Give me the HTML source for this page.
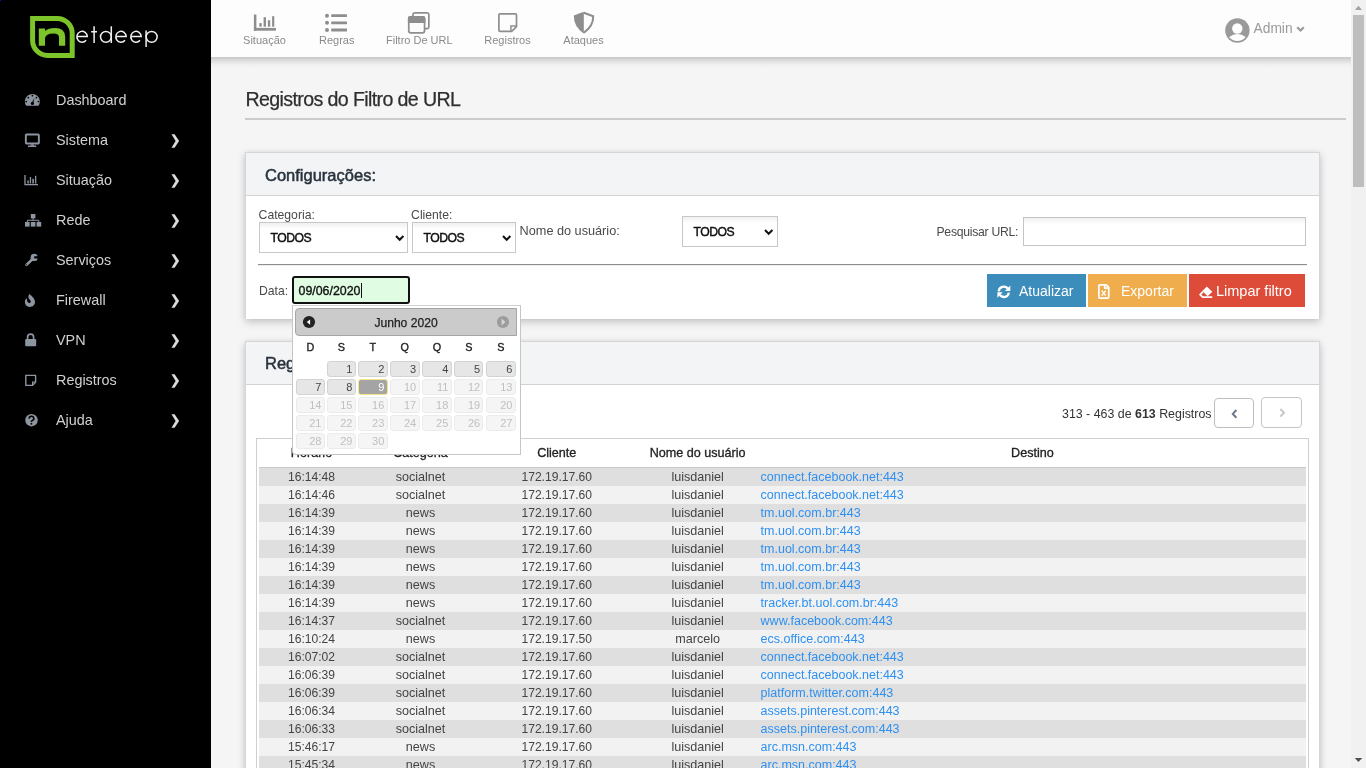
<!DOCTYPE html>
<html><head><meta charset="utf-8">
<style>
*{box-sizing:border-box;margin:0;padding:0}
html,body{width:1366px;height:768px;overflow:hidden;background:#f5f5f5;font-family:"Liberation Sans",sans-serif;color:#333}
.abs{position:absolute}
#sidebar{position:absolute;left:0;top:0;width:211px;height:768px;background:#000}
.mi{position:absolute;left:0;width:211px;height:40px;color:#d0d0d0;font-size:14.4px}
.mi .t{position:absolute;left:56px;top:12px}
.mi .ic{position:absolute;left:24px;top:13px;width:16px;height:14px}
.mi .ch{position:absolute;left:171px;top:14px}
#header{position:absolute;left:211px;top:0;width:1140px;height:57px;background:#fdfdfd}
#hshadow{position:absolute;left:211px;top:57px;width:1140px;height:11px;background:linear-gradient(#c6c6c6,#dcdcdc 30%,#f0f0f0 70%,#f5f5f5)}
.nav{position:absolute;top:0;height:57px;color:#8a8a8a;font-size:11px;text-align:center}
.nav .t{position:absolute;left:0;right:0;top:34px;white-space:nowrap}
.nav svg{position:absolute;top:11px}
#scroll{position:absolute;left:1351px;top:0;width:15px;height:768px;background:#f1f1f1}
#thumb{position:absolute;left:1353px;top:15px;width:11px;height:172px;background:#bebebe}
.panel{position:absolute;left:245px;width:1075px;background:#fff;border:1px solid #d6d6d6;border-bottom:0;box-shadow:0 3px 8px rgba(0,0,0,.2),0 0 5px rgba(0,0,0,.06)}
.ph{position:absolute;left:0;top:0;right:0;background:#f3f4f6;border-bottom:1px solid #d2d2d2}
.lbl{position:absolute;font-size:12.4px;color:#4a4a4a;white-space:nowrap}
.sel{position:absolute;height:31px;border:1px solid #c8c8c8;background:linear-gradient(#f0f0f0,#fff 6px,#fff);font-size:12.2px;letter-spacing:-.5px;color:#111;-webkit-text-stroke:.45px #111}
.sel .v{position:absolute;left:10.5px;top:8px}
.sel svg{position:absolute;top:11px}
.btn{position:absolute;top:274px;height:33px;color:#fff;font-size:14px}
table{border-collapse:collapse}
.th{position:absolute;top:445.5px;text-align:center;font-size:12.6px;color:#222;-webkit-text-stroke:.3px #222;white-space:nowrap}
.tr{position:absolute;left:259px;width:1047px;height:18px}
.td{position:absolute;top:2.3px;text-align:center;color:#444;white-space:nowrap}
.td.lk{color:#2e90f0;text-align:left}
.dh{top:341.3px;text-align:center;font-size:10.8px;color:#222;-webkit-text-stroke:.35px #222}
.dc{height:15.5px;border:1px solid #d3d3d3;border-radius:3px;background:#e6e6e6;color:#454545;font-size:11px;text-align:right;padding-right:2.3px;line-height:15.2px}
.dc.hl{background:#a4a4a4;border-color:#f6e38a;color:#fff}
.dc.ds{background:#f5f5f5;border-color:#ebebeb;color:#c0c0c0}
</style></head><body><div id="wrap" style="position:absolute;left:0;top:0;width:1366px;height:768px;will-change:transform;overflow:hidden">

<div id="sidebar">
  <svg class="abs" style="left:28px;top:14px" width="136" height="48" viewBox="0 0 136 48">
    <path d="M4.6,4.4 H29.2 A15,15 0 0 1 44.2,19.4 V41.4 H19.6 A15,15 0 0 1 4.6,26.4 Z" fill="none" stroke="#7cc42a" stroke-width="5"/>
    <path d="M10.8,14.4 H17 V17 Q20,14 27,14 Q37.2,14 37.2,23 V31.7 H31 V23.5 Q31,19.5 25.5,19.5 Q17,19.5 17,25 V31.7 H10.8 Z" fill="#7cc42a"/>
    <g fill="none" stroke="#f0f0f0" stroke-width="1.5">
      <path d="M48.9,22.6 H59.3 A5.2,5.45 0 1 0 58.1,26.3"/>
      <path d="M66.1,12.3 V29 M63.1,17.7 H69"/>
      <path d="M83.3,12.3 V29"/><ellipse cx="77.9" cy="22.85" rx="5.4" ry="5.45"/>
      <path d="M87.8,22.6 H98.2 A5.2,5.45 0 1 0 97,26.3"/>
      <path d="M102.8,22.6 H113.2 A5.2,5.45 0 1 0 112,26.3"/>
      <path d="M118.1,16.6 V33"/><ellipse cx="123.65" cy="22.85" rx="5.5" ry="5.45"/>
    </g>
  </svg>
  <div class="mi" style="top:80px"><svg class="ic" style="left:24px;top:13px;width:17px;height:14px" viewBox="0 0 17 14"><path d="M2.1,12.5 A7.45,7.45 0 1 1 14.6,12.5 Q14.4,12.8 14,12.8 H2.7 Q2.3,12.8 2.1,12.5 Z" fill="#8d96a0"/><path d="M7.6,10.6 L10.3,4.8 L9.2,11 Z" fill="#000"/><circle cx="8.4" cy="10.4" r="1.6" fill="#000"/><circle cx="8.4" cy="2.7" r=".85" fill="#000"/><circle cx="4.3" cy="4.7" r=".85" fill="#000"/><circle cx="12.4" cy="4.7" r=".85" fill="#000"/><circle cx="2.3" cy="8.5" r=".85" fill="#000"/><circle cx="14.4" cy="8.5" r=".85" fill="#000"/></svg><span class="t">Dashboard</span></div>
  <div class="mi" style="top:120px"><svg class="ic" style="left:24px;top:13px;width:17px;height:15px" viewBox="0 0 17 15"><rect x="1.85" y="1.55" width="13" height="9" fill="none" stroke="#8d96a0" stroke-width="1.9" rx=".7"/><rect x="6.8" y="11.3" width="3" height="1.5" fill="#8d96a0"/><rect x="4" y="12.6" width="8.3" height="1.4" rx=".5" fill="#8d96a0"/></svg><span class="t">Sistema</span><svg class="ch" width="9" height="14" viewBox="0 0 9 14"><path d="M0.5,0.2 H3.6 L8.1,7 L3.6,13.8 H0.5 L4.6,7 Z" fill="#d8dbe0"/></svg></div>
  <div class="mi" style="top:160px"><svg class="ic" style="left:24px;top:14px;width:15px;height:12px" viewBox="0 0 15 12"><path d="M1,1 V10.6 H14" fill="none" stroke="#8d96a0" stroke-width="1.3"/><rect x="3.3" y="6.5" width="1.5" height="3" fill="#8d96a0"/><rect x="5.8" y="3" width="1.3" height="6.5" fill="#8d96a0"/><rect x="8.3" y="4.8" width="1.6" height="4.7" fill="#8d96a0"/><rect x="11" y="1.8" width="1.3" height="7.7" fill="#8d96a0"/></svg><span class="t">Situação</span><svg class="ch" width="9" height="14" viewBox="0 0 9 14"><path d="M0.5,0.2 H3.6 L8.1,7 L3.6,13.8 H0.5 L4.6,7 Z" fill="#d8dbe0"/></svg></div>
  <div class="mi" style="top:200px"><svg class="ic" style="left:24px;top:13px;width:18px;height:14px" viewBox="0 0 18 14"><rect x="6.8" y="1" width="4.6" height="4.4" fill="#8d96a0"/><path d="M9.1,5 V7.3 M3.4,9 V7.3 H14.8 V9" fill="none" stroke="#8d96a0" stroke-width="1"/><rect x="1" y="9" width="4.6" height="4.6" fill="#8d96a0"/><rect x="6.8" y="9" width="4.6" height="4.6" fill="#8d96a0"/><rect x="12.6" y="9" width="4.6" height="4.6" fill="#8d96a0"/></svg><span class="t">Rede</span><svg class="ch" width="9" height="14" viewBox="0 0 9 14"><path d="M0.5,0.2 H3.6 L8.1,7 L3.6,13.8 H0.5 L4.6,7 Z" fill="#d8dbe0"/></svg></div>
  <div class="mi" style="top:240px"><svg class="ic" style="left:24px;top:13px;width:15px;height:14px" viewBox="0 0 15 14"><path d="M8.6,6 L2.5,11.9" stroke="#8d96a0" stroke-width="2.7" stroke-linecap="round"/><circle cx="10.2" cy="4.4" r="3.6" fill="#8d96a0"/><path d="M10.4,3.25 H15 V5.6 H10.4 Q9.8,4.4 10.4,3.25 Z" fill="#000"/><circle cx="2.6" cy="11.7" r=".55" fill="#000"/></svg><span class="t">Serviços</span><svg class="ch" width="9" height="14" viewBox="0 0 9 14"><path d="M0.5,0.2 H3.6 L8.1,7 L3.6,13.8 H0.5 L4.6,7 Z" fill="#d8dbe0"/></svg></div>
  <div class="mi" style="top:280px"><svg class="ic" style="left:24px;top:13px;width:12px;height:15px" viewBox="0 0 12 15"><path d="M5.6,1 C8,3.5 11,5.5 11,9 C11,12 8.7,13.9 5.9,13.9 C3,13.9 0.9,12 0.9,9 C0.9,7.3 1.7,6 2.6,5.3 C3.2,6.5 3.1,7.6 3.4,8.6 C3.7,9.6 4.5,10 5.2,10 C6.3,10 6.9,9.2 6.7,8.2 C6.4,6.8 4.4,5.8 4.4,3.9 C4.4,2.8 4.9,1.7 5.6,1 Z" fill="#8d96a0"/></svg><span class="t">Firewall</span><svg class="ch" width="9" height="14" viewBox="0 0 9 14"><path d="M0.5,0.2 H3.6 L8.1,7 L3.6,13.8 H0.5 L4.6,7 Z" fill="#d8dbe0"/></svg></div>
  <div class="mi" style="top:320px"><svg class="ic" style="left:24px;top:13px;width:13px;height:14px" viewBox="0 0 13 14"><path d="M3.6,6 V4.2 A3,3 0 0 1 9.6,4.2 V6" fill="none" stroke="#8d96a0" stroke-width="1.7"/><rect x="1.2" y="6" width="11" height="7.3" rx="1" fill="#8d96a0"/></svg><span class="t">VPN</span><svg class="ch" width="9" height="14" viewBox="0 0 9 14"><path d="M0.5,0.2 H3.6 L8.1,7 L3.6,13.8 H0.5 L4.6,7 Z" fill="#d8dbe0"/></svg></div>
  <div class="mi" style="top:360px"><svg class="ic" style="left:24px;top:13px;width:13px;height:14px" viewBox="0 0 13 14"><path d="M1.8,2.4 H11.6 V9 L8.6,12.4 H1.8 Z" fill="none" stroke="#8d96a0" stroke-width="1.4" stroke-linejoin="round"/><path d="M11.6,9 H8.6 V12.4" fill="none" stroke="#8d96a0" stroke-width="1.2"/></svg><span class="t">Registros</span><svg class="ch" width="9" height="14" viewBox="0 0 9 14"><path d="M0.5,0.2 H3.6 L8.1,7 L3.6,13.8 H0.5 L4.6,7 Z" fill="#d8dbe0"/></svg></div>
  <div class="mi" style="top:400px"><svg class="ic" style="left:24px;top:13px;width:14px;height:14px" viewBox="0 0 14 14"><circle cx="7.5" cy="7.2" r="6.2" fill="#8d96a0"/><path d="M5.2,5.6 A2.3,2.2 0 1 1 8.2,7.6 Q7.4,8 7.4,9" fill="none" stroke="#000" stroke-width="1.6"/><rect x="6.6" y="10" width="1.6" height="1.6" fill="#000"/></svg><span class="t">Ajuda</span><svg class="ch" width="9" height="14" viewBox="0 0 9 14"><path d="M0.5,0.2 H3.6 L8.1,7 L3.6,13.8 H0.5 L4.6,7 Z" fill="#d8dbe0"/></svg></div>
</div>

<div id="header">
  <svg class="abs" style="left:0;top:0" width="1140" height="57" viewBox="211 0 1140 57">
    <g fill="#8e8e8e">
      <!-- situacao -->
      <rect x="253.9" y="14.5" width="2.5" height="16.2"/><rect x="253.9" y="27.9" width="22.1" height="2.8"/>
      <rect x="259.3" y="23.1" width="2.4" height="3.6"/><rect x="263.6" y="17.2" width="2.4" height="9.5"/>
      <rect x="267.9" y="20.2" width="2.3" height="6.5"/><rect x="272.1" y="16.2" width="2.2" height="10.5"/>
      <!-- regras -->
      <circle cx="327" cy="15.7" r="2"/><circle cx="327" cy="22.8" r="2"/><circle cx="327" cy="30" r="2"/>
      <rect x="331.2" y="14.3" width="15.8" height="2.8" rx=".5"/><rect x="331.2" y="21.4" width="15.8" height="2.8" rx=".5"/><rect x="331.2" y="28.6" width="15.8" height="2.8" rx=".5"/>
      <!-- filtro -->
      <path d="M410.5,16 H423 A2.4,2.4 0 0 1 425.4,18.4 V22.9 H407.9 V18.4 A2.4,2.4 0 0 1 410.5,16 Z"/>
    </g>
    <g fill="none" stroke="#8e8e8e" stroke-width="1.7">
      <path d="M412.95,16.5 V14.5 A1.7,1.7 0 0 1 414.6,12.85 H427.2 A1.7,1.7 0 0 1 428.85,14.5 V27 A1.7,1.7 0 0 1 427.2,28.65 H425"/>
      <rect x="408.75" y="16.85" width="15.8" height="16" rx="2"/>
      <!-- registros note -->
      <path d="M500,13.8 H515.4 A1.1,1.1 0 0 1 516.5,14.9 V26.6 L511.7,31.3 H500 A1.1,1.1 0 0 1 498.9,30.2 V14.9 A1.1,1.1 0 0 1 500,13.8 Z" stroke-linejoin="round"/>
      <path d="M516.5,26 H510.9 V31.3" stroke-width="1.5"/>
      <!-- shield -->
      <path d="M583.8,12.8 L593.2,16.3 Q593.5,26 583.8,32.7" stroke-width="2"/>
      <!-- admin chevron -->
      <path d="M1297.2,27.2 L1300.5,30.6 L1303.8,27.2" stroke="#9a9a9a" stroke-width="2.1"/>
    </g>
    <path d="M583.8,11.7 L573.8,15.6 Q573.6,26.5 583.8,33.8 Z" fill="#8e8e8e"/>
    <!-- avatar -->
    <circle cx="1237.4" cy="30.5" r="12.2" fill="#9a9a9a"/>
    <circle cx="1237.3" cy="28.5" r="5.2" fill="#fff"/>
    <path d="M1229.15,37 Q1237.4,31 1245.65,37 A10.5,10.5 0 0 1 1229.15,37 Z" fill="#fff"/>
  </svg>
  <div class="nav" style="left:32px;width:43px"><span class="t">Situação</span></div>
  <div class="nav" style="left:108px;width:34px"><span class="t">Regras</span></div>
  <div class="nav" style="left:175px;width:66px"><span class="t">Filtro De URL</span></div>
  <div class="nav" style="left:273px;width:47px"><span class="t">Registros</span></div>
  <div class="nav" style="left:352px;width:41px"><span class="t">Ataques</span></div>
  <div class="abs" style="left:1042.5px;top:20.6px;font-size:13.8px;color:#9a9a9a">Admin</div>
</div>

<div id="hshadow"></div>

<!-- content -->
<div class="abs" style="left:245.5px;top:88px;font-size:19.6px;letter-spacing:-0.62px;color:#2e2e2e;-webkit-text-stroke:.25px #2e2e2e;white-space:nowrap">Registros do Filtro de URL</div>
<div class="abs" style="left:245px;top:118px;width:1101px;height:2px;background:#cbcbcb"></div>

<div class="panel" style="top:152px;height:167px">
  <div class="ph" style="height:43px"></div>
</div>

<div class="abs" style="left:265px;top:165.6px;font-size:16.5px;color:#28323c;-webkit-text-stroke:.5px #28323c;white-space:nowrap">Configurações:</div>
<div class="lbl" style="left:258.6px;top:207.5px;font-size:12.2px">Categoria:</div>
<div class="sel" style="left:259px;top:222px;width:149px;height:31px"><span class="v" style="top:7.5px">TODOS</span><svg style="left:135px;top:12px" width="10" height="7" viewBox="0 0 10 7"><path d="M1,1 L4.7,4.8 L8.4,1" fill="none" stroke="#111" stroke-width="2"/></svg></div>
<div class="lbl" style="left:411.1px;top:207.5px;font-size:12.2px">Cliente:</div>
<div class="sel" style="left:412px;top:222px;width:104px;height:31px"><span class="v" style="top:7.5px">TODOS</span><svg style="left:89px;top:12px" width="10" height="7" viewBox="0 0 10 7"><path d="M1,1 L4.7,4.8 L8.4,1" fill="none" stroke="#111" stroke-width="2"/></svg></div>
<div class="lbl" style="left:519.6px;top:224px;font-size:12.7px">Nome do usuário:</div>
<div class="sel" style="left:682px;top:216px;width:96px;height:31px"><span class="v" style="top:7.5px">TODOS</span><svg style="left:81px;top:12px" width="10" height="7" viewBox="0 0 10 7"><path d="M1,1 L4.7,4.8 L8.4,1" fill="none" stroke="#111" stroke-width="2"/></svg></div>
<div class="lbl" style="left:936.5px;top:224.9px;font-size:12.2px;letter-spacing:-.26px">Pesquisar URL:</div>
<div class="abs" style="left:1023px;top:217px;width:283px;height:29px;border:1px solid #c4c4c4;background:linear-gradient(#f0f1f3,#fff 7px,#fff)"></div>
<div class="abs" style="left:258px;top:264px;width:1049px;height:1px;background:#8f8f8f"></div>
<div class="abs" style="left:258px;top:265px;width:1049px;height:1px;background:#ececec"></div>
<div class="lbl" style="left:259px;top:283.6px;font-size:12.2px">Data:</div>
<div class="abs" style="left:292px;top:276px;width:118px;height:28px;border:2px solid #111;border-radius:3px;background:#e0fde3"></div>
<div class="abs" style="left:298.5px;top:283.5px;font-size:12.4px;color:#111;-webkit-text-stroke:.35px #111;white-space:nowrap">09/06/2020</div>
<div class="abs" style="left:361px;top:283px;width:1px;height:15px;background:#111"></div>
<div class="btn" style="left:987px;width:99px;background:#3c8dbc"><svg class="abs" style="left:10px;top:10px" width="14" height="15" viewBox="0 0 14 15"><path d="M1.75,7.4 A5.1,5.1 0 0 1 10.8,4.5" fill="none" stroke="#fff" stroke-width="2.3"/><path d="M13.3,1.6 V7 H7.9 Z" fill="#fff"/><path d="M11.9,8.6 A5.1,5.1 0 0 1 2.9,11.1" fill="none" stroke="#fff" stroke-width="2.3"/><path d="M0.4,8.2 H5.8 L0.4,13.8 Z" fill="#fff"/></svg><span class="abs" style="left:32px;top:9px;font-size:14px">Atualizar</span></div>
<div class="btn" style="left:1088px;width:99px;background:#f0ad4e"><svg class="abs" style="left:10px;top:10px" width="12" height="15" viewBox="0 0 12 15"><path d="M1.8,0.85 H8.3 L10.75,3.4 V13.1 Q10.75,14.05 9.8,14.05 H1.8 Q0.85,14.05 0.85,13.1 V1.8 Q0.85,0.85 1.8,0.85 Z M6.7,0.85 V4.1 H10.75" fill="none" stroke="#fff" stroke-width="1.7" stroke-linejoin="round"/><path d="M3.7,6.6 L7.7,11.6 M7.7,6.6 L3.7,11.6" stroke="#fff" stroke-width="1.5"/></svg><span class="abs" style="left:33px;top:9px;font-size:14px">Exportar</span></div>
<div class="btn" style="left:1189px;width:116px;background:#dd4b39"><svg class="abs" style="left:10px;top:11px" width="15" height="14" viewBox="0 0 15 14"><path d="M7.9,1.5 L13.3,6.8 L8.6,11.3 L3.3,6 Z" fill="#fff"/><path d="M4,6.7 L1.1,9.6 L3.7,12.1 H13.3" fill="none" stroke="#fff" stroke-width="1.8" stroke-linejoin="round"/></svg><span class="abs" style="left:27px;top:9px;font-size:14.5px">Limpar filtro</span></div>
<div class="panel" style="top:341px;height:440px">
  <div class="ph" style="height:43px"></div>
</div>

<div class="abs" style="left:265px;top:354.3px;font-size:16.5px;color:#28323c;-webkit-text-stroke:.5px #28323c;white-space:nowrap">Registros:</div>
<div class="abs" style="left:1062px;top:407px;font-size:12.4px;color:#333;white-space:nowrap">313 - 463 de <b>613</b> Registros</div>
<div class="abs" style="left:1214px;top:398px;width:40px;height:30px;border:1px solid #bdbdbd;border-radius:4px;background:#fff"><svg class="abs" style="left:16px;top:10px" width="7" height="10" viewBox="0 0 7 10"><path d="M5.4,1 L1.8,4.9 L5.4,8.8" fill="none" stroke="#6c7a89" stroke-width="2"/></svg></div>
<div class="abs" style="left:1261px;top:397px;width:41px;height:31px;border:1px solid #c4c4c4;border-radius:4px;background:#fff"><svg class="abs" style="left:17px;top:10px" width="7" height="10" viewBox="0 0 7 10"><path d="M1.4,1 L5,4.8 L1.4,8.6" fill="none" stroke="#c8c8c8" stroke-width="2"/></svg></div>
<div class="abs" style="left:256px;top:438px;width:1053px;height:340px;border:1px solid #cfcfcf;background:#fff"></div>
<div class="th" style="left:259px;width:105px">Horario</div>
<div class="th" style="left:364px;width:113px">Categoria</div>
<div class="th" style="left:477px;width:159.5px">Cliente</div>
<div class="th" style="left:636.5px;width:122.29999999999995px">Nome do usuário</div>
<div class="th" style="left:758.8px;width:547.2px">Destino</div>
<div class="abs" style="left:259px;top:467px;width:1047px;height:1px;background:#c9c9c9"></div>
<div class="tr" style="top:468px;background:#e0dfdf">
<span class="td" style="left:0px;width:105px;font-size:12.1px">16:14:48</span>
<span class="td" style="left:105px;width:113px;font-size:12.6px">socialnet</span>
<span class="td" style="left:218px;width:159.5px;font-size:12.1px">172.19.17.60</span>
<span class="td" style="left:377.5px;width:122.29999999999995px;font-size:12.6px">luisdaniel</span>
<span class="td lk" style="left:501.59999999999997px;font-size:12.5px">connect.facebook.net:443</span>
</div>
<div class="tr" style="top:486px;background:#f2f2f2">
<span class="td" style="left:0px;width:105px;font-size:12.1px">16:14:46</span>
<span class="td" style="left:105px;width:113px;font-size:12.6px">socialnet</span>
<span class="td" style="left:218px;width:159.5px;font-size:12.1px">172.19.17.60</span>
<span class="td" style="left:377.5px;width:122.29999999999995px;font-size:12.6px">luisdaniel</span>
<span class="td lk" style="left:501.59999999999997px;font-size:12.5px">connect.facebook.net:443</span>
</div>
<div class="tr" style="top:504px;background:#e0dfdf">
<span class="td" style="left:0px;width:105px;font-size:12.1px">16:14:39</span>
<span class="td" style="left:105px;width:113px;font-size:12.6px">news</span>
<span class="td" style="left:218px;width:159.5px;font-size:12.1px">172.19.17.60</span>
<span class="td" style="left:377.5px;width:122.29999999999995px;font-size:12.6px">luisdaniel</span>
<span class="td lk" style="left:501.59999999999997px;font-size:12.5px">tm.uol.com.br:443</span>
</div>
<div class="tr" style="top:522px;background:#f2f2f2">
<span class="td" style="left:0px;width:105px;font-size:12.1px">16:14:39</span>
<span class="td" style="left:105px;width:113px;font-size:12.6px">news</span>
<span class="td" style="left:218px;width:159.5px;font-size:12.1px">172.19.17.60</span>
<span class="td" style="left:377.5px;width:122.29999999999995px;font-size:12.6px">luisdaniel</span>
<span class="td lk" style="left:501.59999999999997px;font-size:12.5px">tm.uol.com.br:443</span>
</div>
<div class="tr" style="top:540px;background:#e0dfdf">
<span class="td" style="left:0px;width:105px;font-size:12.1px">16:14:39</span>
<span class="td" style="left:105px;width:113px;font-size:12.6px">news</span>
<span class="td" style="left:218px;width:159.5px;font-size:12.1px">172.19.17.60</span>
<span class="td" style="left:377.5px;width:122.29999999999995px;font-size:12.6px">luisdaniel</span>
<span class="td lk" style="left:501.59999999999997px;font-size:12.5px">tm.uol.com.br:443</span>
</div>
<div class="tr" style="top:558px;background:#f2f2f2">
<span class="td" style="left:0px;width:105px;font-size:12.1px">16:14:39</span>
<span class="td" style="left:105px;width:113px;font-size:12.6px">news</span>
<span class="td" style="left:218px;width:159.5px;font-size:12.1px">172.19.17.60</span>
<span class="td" style="left:377.5px;width:122.29999999999995px;font-size:12.6px">luisdaniel</span>
<span class="td lk" style="left:501.59999999999997px;font-size:12.5px">tm.uol.com.br:443</span>
</div>
<div class="tr" style="top:576px;background:#e0dfdf">
<span class="td" style="left:0px;width:105px;font-size:12.1px">16:14:39</span>
<span class="td" style="left:105px;width:113px;font-size:12.6px">news</span>
<span class="td" style="left:218px;width:159.5px;font-size:12.1px">172.19.17.60</span>
<span class="td" style="left:377.5px;width:122.29999999999995px;font-size:12.6px">luisdaniel</span>
<span class="td lk" style="left:501.59999999999997px;font-size:12.5px">tm.uol.com.br:443</span>
</div>
<div class="tr" style="top:594px;background:#f2f2f2">
<span class="td" style="left:0px;width:105px;font-size:12.1px">16:14:39</span>
<span class="td" style="left:105px;width:113px;font-size:12.6px">news</span>
<span class="td" style="left:218px;width:159.5px;font-size:12.1px">172.19.17.60</span>
<span class="td" style="left:377.5px;width:122.29999999999995px;font-size:12.6px">luisdaniel</span>
<span class="td lk" style="left:501.59999999999997px;font-size:12.5px">tracker.bt.uol.com.br:443</span>
</div>
<div class="tr" style="top:612px;background:#e0dfdf">
<span class="td" style="left:0px;width:105px;font-size:12.1px">16:14:37</span>
<span class="td" style="left:105px;width:113px;font-size:12.6px">socialnet</span>
<span class="td" style="left:218px;width:159.5px;font-size:12.1px">172.19.17.60</span>
<span class="td" style="left:377.5px;width:122.29999999999995px;font-size:12.6px">luisdaniel</span>
<span class="td lk" style="left:501.59999999999997px;font-size:12.5px">www.facebook.com:443</span>
</div>
<div class="tr" style="top:630px;background:#f2f2f2">
<span class="td" style="left:0px;width:105px;font-size:12.1px">16:10:24</span>
<span class="td" style="left:105px;width:113px;font-size:12.6px">news</span>
<span class="td" style="left:218px;width:159.5px;font-size:12.1px">172.19.17.50</span>
<span class="td" style="left:377.5px;width:122.29999999999995px;font-size:12.6px">marcelo</span>
<span class="td lk" style="left:501.59999999999997px;font-size:12.5px">ecs.office.com:443</span>
</div>
<div class="tr" style="top:648px;background:#e0dfdf">
<span class="td" style="left:0px;width:105px;font-size:12.1px">16:07:02</span>
<span class="td" style="left:105px;width:113px;font-size:12.6px">socialnet</span>
<span class="td" style="left:218px;width:159.5px;font-size:12.1px">172.19.17.60</span>
<span class="td" style="left:377.5px;width:122.29999999999995px;font-size:12.6px">luisdaniel</span>
<span class="td lk" style="left:501.59999999999997px;font-size:12.5px">connect.facebook.net:443</span>
</div>
<div class="tr" style="top:666px;background:#f2f2f2">
<span class="td" style="left:0px;width:105px;font-size:12.1px">16:06:39</span>
<span class="td" style="left:105px;width:113px;font-size:12.6px">socialnet</span>
<span class="td" style="left:218px;width:159.5px;font-size:12.1px">172.19.17.60</span>
<span class="td" style="left:377.5px;width:122.29999999999995px;font-size:12.6px">luisdaniel</span>
<span class="td lk" style="left:501.59999999999997px;font-size:12.5px">connect.facebook.net:443</span>
</div>
<div class="tr" style="top:684px;background:#e0dfdf">
<span class="td" style="left:0px;width:105px;font-size:12.1px">16:06:39</span>
<span class="td" style="left:105px;width:113px;font-size:12.6px">socialnet</span>
<span class="td" style="left:218px;width:159.5px;font-size:12.1px">172.19.17.60</span>
<span class="td" style="left:377.5px;width:122.29999999999995px;font-size:12.6px">luisdaniel</span>
<span class="td lk" style="left:501.59999999999997px;font-size:12.5px">platform.twitter.com:443</span>
</div>
<div class="tr" style="top:702px;background:#f2f2f2">
<span class="td" style="left:0px;width:105px;font-size:12.1px">16:06:34</span>
<span class="td" style="left:105px;width:113px;font-size:12.6px">socialnet</span>
<span class="td" style="left:218px;width:159.5px;font-size:12.1px">172.19.17.60</span>
<span class="td" style="left:377.5px;width:122.29999999999995px;font-size:12.6px">luisdaniel</span>
<span class="td lk" style="left:501.59999999999997px;font-size:12.5px">assets.pinterest.com:443</span>
</div>
<div class="tr" style="top:720px;background:#e0dfdf">
<span class="td" style="left:0px;width:105px;font-size:12.1px">16:06:33</span>
<span class="td" style="left:105px;width:113px;font-size:12.6px">socialnet</span>
<span class="td" style="left:218px;width:159.5px;font-size:12.1px">172.19.17.60</span>
<span class="td" style="left:377.5px;width:122.29999999999995px;font-size:12.6px">luisdaniel</span>
<span class="td lk" style="left:501.59999999999997px;font-size:12.5px">assets.pinterest.com:443</span>
</div>
<div class="tr" style="top:738px;background:#f2f2f2">
<span class="td" style="left:0px;width:105px;font-size:12.1px">15:46:17</span>
<span class="td" style="left:105px;width:113px;font-size:12.6px">news</span>
<span class="td" style="left:218px;width:159.5px;font-size:12.1px">172.19.17.60</span>
<span class="td" style="left:377.5px;width:122.29999999999995px;font-size:12.6px">luisdaniel</span>
<span class="td lk" style="left:501.59999999999997px;font-size:12.5px">arc.msn.com:443</span>
</div>
<div class="tr" style="top:756px;background:#e0dfdf">
<span class="td" style="left:0px;width:105px;font-size:12.1px">15:45:34</span>
<span class="td" style="left:105px;width:113px;font-size:12.6px">news</span>
<span class="td" style="left:218px;width:159.5px;font-size:12.1px">172.19.17.60</span>
<span class="td" style="left:377.5px;width:122.29999999999995px;font-size:12.6px">luisdaniel</span>
<span class="td lk" style="left:501.59999999999997px;font-size:12.5px">arc.msn.com:443</span>
</div>
<div id="dp" class="abs" style="left:292px;top:305px;width:229px;height:150px;border:1px solid #c5c5c5;border-top-color:#d0d0d0;border-radius:0 0 1px 4px;background:#fff"></div>
<div class="abs" style="left:295px;top:308px;width:222px;height:28px;border:1px solid #a6a6a6;border-radius:4px 0 0 4px;background:#cbcbcb"></div>
<svg class="abs" style="left:302px;top:315px" width="14" height="14" viewBox="0 0 14 14"><circle cx="7" cy="7" r="6.1" fill="#222"/><path d="M8.1,4.5 L4.8,7.1 L8.1,9.8 Z" fill="#fff"/></svg>
<svg class="abs" style="left:496px;top:315px" width="14" height="14" viewBox="0 0 14 14"><circle cx="7" cy="7" r="6.1" fill="#9c9c9c"/><path d="M5.6,3.6 L9.4,7.1 L5.6,10.6 Z" fill="#d6d6d6"/></svg>
<div class="abs" style="left:295px;top:315.5px;width:222px;text-align:center;font-size:12.1px;color:#222;-webkit-text-stroke:.25px #222">Junho 2020</div>
<div class="abs dh" style="left:296.2px;width:28.5px">D</div>
<div class="abs dh" style="left:327.1px;width:28.6px">S</div>
<div class="abs dh" style="left:358.1px;width:29.5px">T</div>
<div class="abs dh" style="left:390.0px;width:29.5px">Q</div>
<div class="abs dh" style="left:422.1px;width:29.5px">Q</div>
<div class="abs dh" style="left:454.2px;width:29.3px">S</div>
<div class="abs dh" style="left:486.0px;width:29.7px">S</div>
<div class="abs dc" style="left:327.1px;top:361.2px;width:28.6px">1</div>
<div class="abs dc" style="left:358.1px;top:361.2px;width:29.5px">2</div>
<div class="abs dc" style="left:390.0px;top:361.2px;width:29.5px">3</div>
<div class="abs dc" style="left:422.1px;top:361.2px;width:29.5px">4</div>
<div class="abs dc" style="left:454.2px;top:361.2px;width:29.3px">5</div>
<div class="abs dc" style="left:486.0px;top:361.2px;width:29.7px">6</div>
<div class="abs dc" style="left:296.2px;top:379.2px;width:28.5px">7</div>
<div class="abs dc" style="left:327.1px;top:379.2px;width:28.6px">8</div>
<div class="abs dc hl" style="left:358.1px;top:379.2px;width:29.5px">9</div>
<div class="abs dc ds" style="left:390.0px;top:379.2px;width:29.5px">10</div>
<div class="abs dc ds" style="left:422.1px;top:379.2px;width:29.5px">11</div>
<div class="abs dc ds" style="left:454.2px;top:379.2px;width:29.3px">12</div>
<div class="abs dc ds" style="left:486.0px;top:379.2px;width:29.7px">13</div>
<div class="abs dc ds" style="left:296.2px;top:397.2px;width:28.5px">14</div>
<div class="abs dc ds" style="left:327.1px;top:397.2px;width:28.6px">15</div>
<div class="abs dc ds" style="left:358.1px;top:397.2px;width:29.5px">16</div>
<div class="abs dc ds" style="left:390.0px;top:397.2px;width:29.5px">17</div>
<div class="abs dc ds" style="left:422.1px;top:397.2px;width:29.5px">18</div>
<div class="abs dc ds" style="left:454.2px;top:397.2px;width:29.3px">19</div>
<div class="abs dc ds" style="left:486.0px;top:397.2px;width:29.7px">20</div>
<div class="abs dc ds" style="left:296.2px;top:415.2px;width:28.5px">21</div>
<div class="abs dc ds" style="left:327.1px;top:415.2px;width:28.6px">22</div>
<div class="abs dc ds" style="left:358.1px;top:415.2px;width:29.5px">23</div>
<div class="abs dc ds" style="left:390.0px;top:415.2px;width:29.5px">24</div>
<div class="abs dc ds" style="left:422.1px;top:415.2px;width:29.5px">25</div>
<div class="abs dc ds" style="left:454.2px;top:415.2px;width:29.3px">26</div>
<div class="abs dc ds" style="left:486.0px;top:415.2px;width:29.7px">27</div>
<div class="abs dc ds" style="left:296.2px;top:433.2px;width:28.5px">28</div>
<div class="abs dc ds" style="left:327.1px;top:433.2px;width:28.6px">29</div>
<div class="abs dc ds" style="left:358.1px;top:433.2px;width:29.5px">30</div>
<div id="px0" class="abs" style="left:0;top:0;width:1px;height:1px;background:#0010e0"></div>
<div id="scroll"></div>
<div id="thumb"></div>
<svg class="abs" style="left:1351px;top:0" width="15" height="768"><path d="M3.9,10 L7.5,5.8 L11,10 Z" fill="#a3a3a3"/><path d="M3.8,757.9 L7.4,761.9 L11.4,757.9 Z" fill="#505050"/></svg>
</div></body></html>
